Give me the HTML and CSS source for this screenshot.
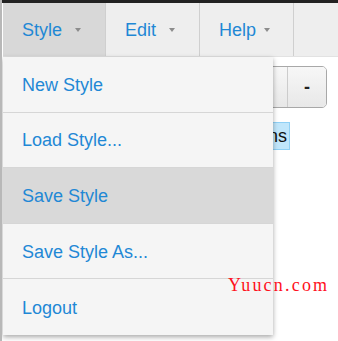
FILE: index.html
```html
<!DOCTYPE html>
<html lang="en">
  <head>
    <meta charset="UTF-8" />
    <meta name="viewport" content="width=device-width, initial-scale=1.0" />
    <title>Style Editor</title>
    <link rel="stylesheet" href="styles.css">
  </head>
  <body>
    <div class="topbar"></div>
    <div class="navbar">
      <div class="nav-item active">
        <span class="nav-label">Style</span><span class="caret"></span>
      </div>
      <div class="nav-item">
        <span class="nav-label">Edit</span><span class="caret"></span>
      </div>
      <div class="nav-item">
        <span class="nav-label">Help</span><span class="caret"></span>
      </div>
    </div>

    <div class="content">
      <div class="btn-group">
        <button class="btn">+</button>
        <button class="btn">-</button>
      </div>
      <div class="tag-row">
        <span class="tag">Options</span>
      </div>
    </div>

    <ul class="dropdown">
      <li>New Style</li>
      <li>Load Style...</li>
      <li class="hover">Save Style</li>
      <li>Save Style As...</li>
      <li>Logout</li>
    </ul>

    <div class="watermark">Yuucn.com</div>
  </body>
</html>
```

FILE: styles.css
```css
body {
  font-family: "Liberation Sans", Arial, sans-serif;
  margin: 0;
  background-color: #ffffff;
  border-left: 2px solid #b8b8b8;
  padding-left: 1px;
  height: 341px;
  box-sizing: border-box;
  position: relative;
  overflow: hidden;
}

.topbar {
  height: 3px;
  background-color: #222;
  margin-left: -3px;
}

.navbar {
  display: flex;
  height: 54px;
  background-color: #eeeeee;
  border-bottom: 1px solid #e2e2e2;
  box-sizing: border-box;
}

.nav-item {
  display: flex;
  align-items: center;
  justify-content: space-between;
  padding: 0 24px 0 19px;
  border-right: 1px solid #cfcfcf;
  font-size: 18px;
  color: #1f88d5;
  box-sizing: border-box;
  width: 94px;
}

.nav-item.active {
  width: 103px;
  background-color: #d8d8d8;
}

.nav-item:last-child {
  padding-right: 23px;
}

.nav-label {
  margin-top: 1px;
}

.caret {
  width: 0;
  height: 0;
  border-left: 3px solid transparent;
  border-right: 3px solid transparent;
  border-top: 4px solid #8c8c8c;
}

.content {
  display: flex;
  flex-direction: column;
  align-items: flex-end;
  padding: 9px 11px 0 0;
}

.btn-group {
  display: flex;
  border: 1px solid #a8a8a8;
  border-radius: 5px;
  overflow: hidden;
}

.btn {
  width: 39px;
  height: 40px;
  border: none;
  background: linear-gradient(#f7f7f7, #e8e8e8);
  font-family: "Liberation Sans", Arial, sans-serif;
  font-size: 18px;
  font-weight: bold;
  color: #222;
}

.btn + .btn {
  border-left: 1px solid #cccccc;
}

.tag-row {
  margin-top: 14px;
  padding-right: 37px;
}

.tag {
  display: inline-block;
  font-size: 18px;
  line-height: 26px;
  padding: 0 2px 0 4px;
  background-color: #c0e6fb;
  border: 1px solid #8fd0f5;
  color: #111;
}

.dropdown {
  position: absolute;
  top: 57px;
  left: 1px;
  width: 270px;
  margin: 0;
  padding: 0;
  list-style: none;
  background-color: #f5f5f5;
  box-shadow: 0 2px 5px rgba(0, 0, 0, 0.35);
}

.dropdown li {
  display: flex;
  align-items: center;
  height: 55.6px;
  padding: 2px 0 0 19px;
  box-sizing: border-box;
  font-size: 18px;
  color: #1f88d5;
  border-bottom: 1px solid #d6d6d6;
}

.dropdown li:last-child {
  border-bottom: none;
}

.dropdown li.hover {
  background-color: #d9d9d9;
}

.watermark {
  position: absolute;
  top: 275px;
  left: 226px;
  font-family: "Liberation Serif", "Times New Roman", serif;
  font-size: 18px;
  letter-spacing: 2.2px;
  color: #ff1020;
}
```
